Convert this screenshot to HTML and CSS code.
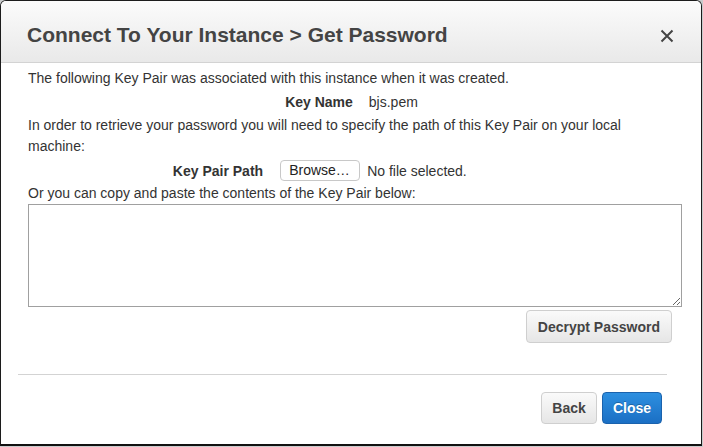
FILE: index.html
```html
<!DOCTYPE html>
<html>
<head>
<meta charset="utf-8">
<link rel="stylesheet" href="styles.css">
</head>
<body>
<div class="dialog">
  <div class="header">
    <h1 class="title">Connect To Your Instance &gt; Get Password</h1>
    <span class="close-x">
      <svg width="14" height="14" viewBox="0 0 14 14"><path d="M1.5 1.5 L12.5 12.5 M12.5 1.5 L1.5 12.5" stroke="#444" stroke-width="2" fill="none"/></svg>
    </span>
  </div>
  <div class="body">
    <p class="line">The following Key Pair was associated with this instance when it was created.</p>
    <div class="row row-key">
      <span class="label">Key Name</span>
      <span class="value">bjs.pem</span>
    </div>
    <p class="para">In order to retrieve your password you will need to specify the path of this Key Pair on your local machine:</p>
    <div class="row row-path">
      <span class="label">Key Pair Path</span>
      <span class="file">
        <span class="browse">Browse…</span>
        <span class="nofile">No file selected.</span>
      </span>
    </div>
    <p class="line small-gap">Or you can copy and paste the contents of the Key Pair below:</p>
    <textarea class="keybox"></textarea>
    <div class="decrypt-row">
      <button class="btn btn-default">Decrypt Password</button>
    </div>
  </div>
  <div class="footer">
    <div class="rule"></div>
    <div class="actions">
      <button class="btn btn-default btn-back">Back</button>
      <button class="btn btn-primary">Close</button>
    </div>
  </div>
</div>
</body>
</html>
```
FILE: styles.css
```css
html, body {
  margin: 0;
  padding: 0;
  background: #c9cbcc;
}
body {
  width: 703px;
  height: 447px;
  overflow: hidden;
  font-family: "Liberation Sans", Arial, sans-serif;
  color: #333;
}
.dialog {
  box-sizing: border-box;
  width: 702px;
  height: 446px;
  background: #fff;
  border: 1px solid #1c1c1c;
  border-bottom: 2px solid #111;
  border-radius: 6px 6px 0 0;
  display: flex;
  flex-direction: column;
  overflow: hidden;
}
.header {
  box-sizing: border-box;
  height: 62px;
  flex: none;
  background: linear-gradient(#fbfbfb, #e9e9e9);
  border-bottom: 1px solid #d3d3d3;
  display: flex;
  align-items: center;
  justify-content: space-between;
  padding: 7px 27px 0 26px;
}
.title {
  margin: 0;
  font-size: 21px;
  font-weight: bold;
  color: #444;
  letter-spacing: 0;
}
.close-x {
  display: flex;
  padding-top: 1px;
}
.body {
  padding: 5px 20px 0 27px;
  font-size: 14px;
  color: #333;
}
.line {
  margin: 0;
  line-height: 20px;
}
.row {
  display: flex;
  justify-content: center;
  align-items: center;
  line-height: 20px;
}
.row-key {
  margin-top: 4px;
  padding-right: 6px;
}
.row-key .label {
  font-weight: bold;
  margin-right: 16px;
}
.label {
  font-weight: bold;
}
.para {
  margin: 3px 0 0;
  line-height: 21px;
}
.row-path {
  margin-top: 3px;
}
.row-path .label {
  margin-right: 17px;
}
.file {
  width: 256px;
  display: flex;
  align-items: center;
}
.browse {
  box-sizing: border-box;
  width: 80px;
  height: 21px;
  line-height: 19px;
  padding: 0 0 0 8px;
  border: 1px solid #c8c8c8;
  border-radius: 4px;
  background: #fff;
  color: #222;
  margin-right: 7px;
}
.nofile {
  color: #333;
}
.small-gap {
  margin-top: 2px;
}
.keybox {
  display: block;
  box-sizing: border-box;
  width: 654px;
  height: 103px;
  margin: 1px 0 0;
  border: 1px solid #a0a0a0;
  resize: both;
  font-family: inherit;
}
.decrypt-row {
  display: flex;
  justify-content: flex-end;
  padding-right: 9px;
  margin-top: 3px;
}
.btn {
  box-sizing: border-box;
  font-family: "Liberation Sans", Arial, sans-serif;
  font-weight: bold;
  font-size: 14px;
  border-radius: 4px;
  padding: 0 11px;
  cursor: pointer;
}
.btn-default {
  height: 33px;
  background: linear-gradient(#fafafa, #e6e6e6);
  border: 1px solid #cfcfcf;
  color: #444;
}
.footer {
  padding: 31px 34px 0 17px;
}
.rule {
  height: 1px;
  background: #d3d3d3;
}
.actions {
  display: flex;
  justify-content: flex-end;
  margin-top: 17px;
  padding-right: 5px;
  gap: 5px;
}
.actions .btn {
  height: 32px;
}
.btn-back {
  width: 56px;
  padding: 0;
}
.btn-primary {
  width: 60px;
  padding: 0;
  background: linear-gradient(#2d8fe0, #1b6fc4);
  border: 1px solid #1a62ad;
  color: #fff;
  text-shadow: 0 -1px 0 rgba(0,0,0,0.25);
}
```
